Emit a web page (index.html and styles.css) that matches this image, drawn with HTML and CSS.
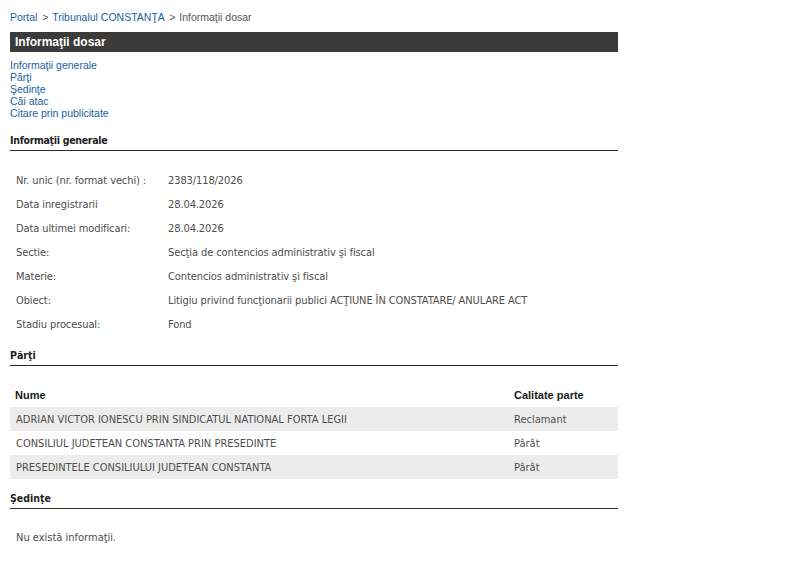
FILE: index.html
```html
<!DOCTYPE html>
<html lang="ro">
<head>
<meta charset="utf-8">
<title>Informaţii dosar</title>
<link rel="stylesheet" href="styles.css">
</head>
<body>
<div class="page">
  <div class="crumbs">
    <a href="#">Portal</a> <span class="sep">&gt;</span> <a href="#">Tribunalul CONSTANŢA</a> <span class="sep">&gt;</span> <span class="current">Informaţii dosar</span>
  </div>
  <div class="titlebar">Informaţii dosar</div>
  <ul class="nav">
    <li><a href="#">Informaţii generale</a></li>
    <li><a href="#">Părţi</a></li>
    <li><a href="#">Şedinţe</a></li>
    <li><a href="#">Căi atac</a></li>
    <li><a href="#">Citare prin publicitate</a></li>
  </ul>

  <h2 class="section first">Informaţii generale</h2>
  <table class="info">
    <tr><td class="lbl">Nr. unic (nr. format vechi) :</td><td>2383/118/2026</td></tr>
    <tr><td class="lbl">Data inregistrarii</td><td>28.04.2026</td></tr>
    <tr><td class="lbl">Data ultimei modificari:</td><td>28.04.2026</td></tr>
    <tr><td class="lbl">Sectie:</td><td>Secţia de contencios administrativ şi fiscal</td></tr>
    <tr><td class="lbl">Materie:</td><td>Contencios administrativ şi fiscal</td></tr>
    <tr><td class="lbl">Obiect:</td><td>Litigiu privind funcţionarii publici ACŢIUNE ÎN CONSTATARE/ ANULARE ACT</td></tr>
    <tr><td class="lbl">Stadiu procesual:</td><td>Fond</td></tr>
  </table>

  <h2 class="section">Părţi</h2>
  <table class="parties">
    <thead>
      <tr><th class="name">Nume</th><th class="role">Calitate parte</th></tr>
    </thead>
    <tbody>
      <tr class="alt"><td>ADRIAN VICTOR IONESCU PRIN SINDICATUL NATIONAL FORTA LEGII</td><td class="role">Reclamant</td></tr>
      <tr><td>CONSILIUL JUDETEAN CONSTANTA PRIN PRESEDINTE</td><td class="role">Pârât</td></tr>
      <tr class="alt"><td>PRESEDINTELE CONSILIULUI JUDETEAN CONSTANTA</td><td class="role">Pârât</td></tr>
    </tbody>
  </table>

  <h2 class="section">Şedinţe</h2>
  <p class="empty">Nu există informaţii.</p>
</div>
</body>
</html>
```

FILE: styles.css
```css
html, body {
  margin: 0;
  padding: 0;
  background: #ffffff;
}

.page {
  width: 608px;
  padding: 11px 10px 10px 10px;
  font-family: "DejaVu Sans Condensed", "DejaVu Sans", sans-serif;
  font-size: 11px;
  color: #4d4d4d;
}

a {
  color: #16629f;
  text-decoration: none;
}

.crumbs {
  font-family: "Liberation Sans", Arial, sans-serif;
  font-size: 10.5px;
  line-height: 12px;
  height: 12px;
  color: #555555;
}

.crumbs .sep {
  margin: 0 1px 0 2px;
}

.titlebar {
  margin-top: 9px;
  height: 20px;
  line-height: 20px;
  background: #3b3b3b;
  color: #ffffff;
  font-family: "Liberation Sans", Arial, sans-serif;
  font-weight: bold;
  font-size: 12px;
  padding-left: 5px;
}

.nav {
  list-style: none;
  margin: 7px 0 0 0;
  padding: 0;
  font-family: "Liberation Sans", Arial, sans-serif;
  font-size: 10.5px;
  line-height: 12px;
}

.section {
  margin: 12px 0 0 0;
  padding: 0 0 3px 0;
  font-size: 10.5px;
  line-height: 14px;
  font-weight: bold;
  color: #222222;
  border-bottom: 1px solid #2a2a2a;
}

.section.first {
  margin-top: 14px;
  letter-spacing: -0.3px;
}

table {
  border-collapse: collapse;
  width: 100%;
  margin-top: 17px;
}

td, th {
  padding: 0 6px;
  height: 24px;
  text-align: left;
  vertical-align: middle;
  white-space: nowrap;
}

.info {
  width: auto;
}

.info td.lbl {
  width: 140px;
}

.info td {
  letter-spacing: -0.1px;
}

.parties th {
  font-family: "Liberation Sans", Arial, sans-serif;
  font-size: 11px;
  font-weight: bold;
  color: #1a1a1a;
  padding-left: 5px;
}

.parties th.role, .parties td.role {
  width: 98px;
  padding-left: 6px;
}

.parties tr.alt td {
  background: #ececec;
}

.empty {
  margin: 17px 0 0 0;
  padding: 0 6px;
  line-height: 24px;
}
```
